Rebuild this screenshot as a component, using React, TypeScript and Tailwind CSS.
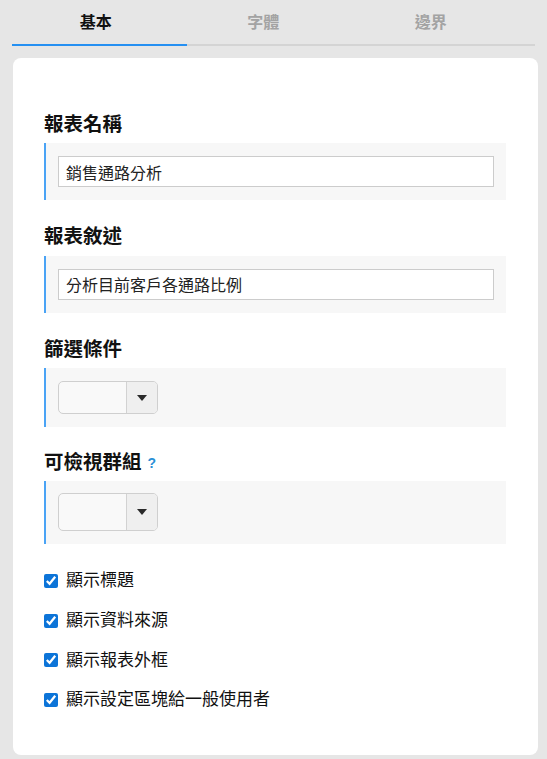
const FONT = "font-['Liberation_Sans','Noto_Sans_CJK_TC',sans-serif]";

const tabs = ["基本", "字體", "邊界"];

const checks = ["顯示標題", "顯示資料來源", "顯示報表外框", "顯示設定區塊給一般使用者"];

function Label({ text, help }: { text: string; help?: boolean }) {
  return (
    <div className="flex h-[27px] items-center text-[19.5px] font-bold text-[#111]">
      {text}
      {help && <span className="ml-[6px] mt-[2px] text-[14px] font-bold text-[#2a8fd6]">?</span>}
    </div>
  );
}

function Block({ children, className }: { children: React.ReactNode; className: string }) {
  return (
    <div className={`mt-[5px] border-l-2 border-[#4aa3f5] bg-[#f7f7f7] pl-[12px] pr-[12px] ${className}`}>
      {children}
    </div>
  );
}

function TextField({ value }: { value: string }) {
  return (
    <input
      defaultValue={value}
      className="h-[31px] w-full border border-[#cccccc] bg-white px-[7px] text-[16px] text-[#222] outline-none"
    />
  );
}

function Select({ h }: { h: string }) {
  return (
    <div className={`flex w-[100px] overflow-hidden rounded-[5px] border border-[#cfcfcf] bg-[#f9f9f9] ${h}`}>
      <div className="flex-1" />
      <div className="flex w-[31px] items-center justify-center border-l border-[#d2d2d2] bg-[#efefef]">
        <svg width="10" height="6" viewBox="0 0 10 6">
          <path d="M0 0h10L5 6z" fill="#2a2a2a" />
        </svg>
      </div>
    </div>
  );
}

export default function App() {
  return (
    <div className={`min-h-[759px] w-[547px] bg-[#e6e6e6] ${FONT}`}>
      <div className="mx-[12px]">
        <div className="flex h-[44px]">
          {tabs.map((t, i) => (
            <div
              key={t}
              className={`flex w-[167.5px] items-center justify-center pt-[2px] text-[16px] font-bold ${
                i === 0 ? "text-[#111]" : "text-[#a3a3a3]"
              }`}
            >
              {t}
            </div>
          ))}
        </div>
        <div className="flex h-[2px] bg-[#d4d4d4]">
          <div className="w-[175px] bg-[#2590f2]" />
        </div>
      </div>

      <div className="mx-[13px] mt-[12px] w-[525px] rounded-[8px] bg-white pb-[45px] pl-[31px] pr-[32px] pt-[53px]">
        <Label text="報表名稱" />
        <Block className="py-[13px]">
          <TextField value="銷售通路分析" />
        </Block>

        <div className="mt-[23.5px]">
          <Label text="報表敘述" />
        </div>
        <Block className="py-[13px]">
          <TextField value="分析目前客戶各通路比例" />
        </Block>

        <div className="mt-[23.5px]">
          <Label text="篩選條件" />
        </div>
        <Block className="pb-[13px] pt-[13px]">
          <Select h="h-[33px]" />
        </Block>

        <div className="mt-[22px]">
          <Label text="可檢視群組" help />
        </div>
        <Block className="pb-[13px] pt-[12px]">
          <Select h="h-[38px]" />
        </Block>

        <div className="mt-[27px] flex flex-col gap-[19.7px]">
          {checks.map((c) => (
            <label key={c} className="flex h-[20px] items-center text-[17px] text-[#111]">
              <input
                type="checkbox"
                defaultChecked
                className="m-0 h-[14px] w-[14px] accent-[#0c74d8]"
              />
              <span className="ml-[8px]">{c}</span>
            </label>
          ))}
        </div>
      </div>
    </div>
  );
}
